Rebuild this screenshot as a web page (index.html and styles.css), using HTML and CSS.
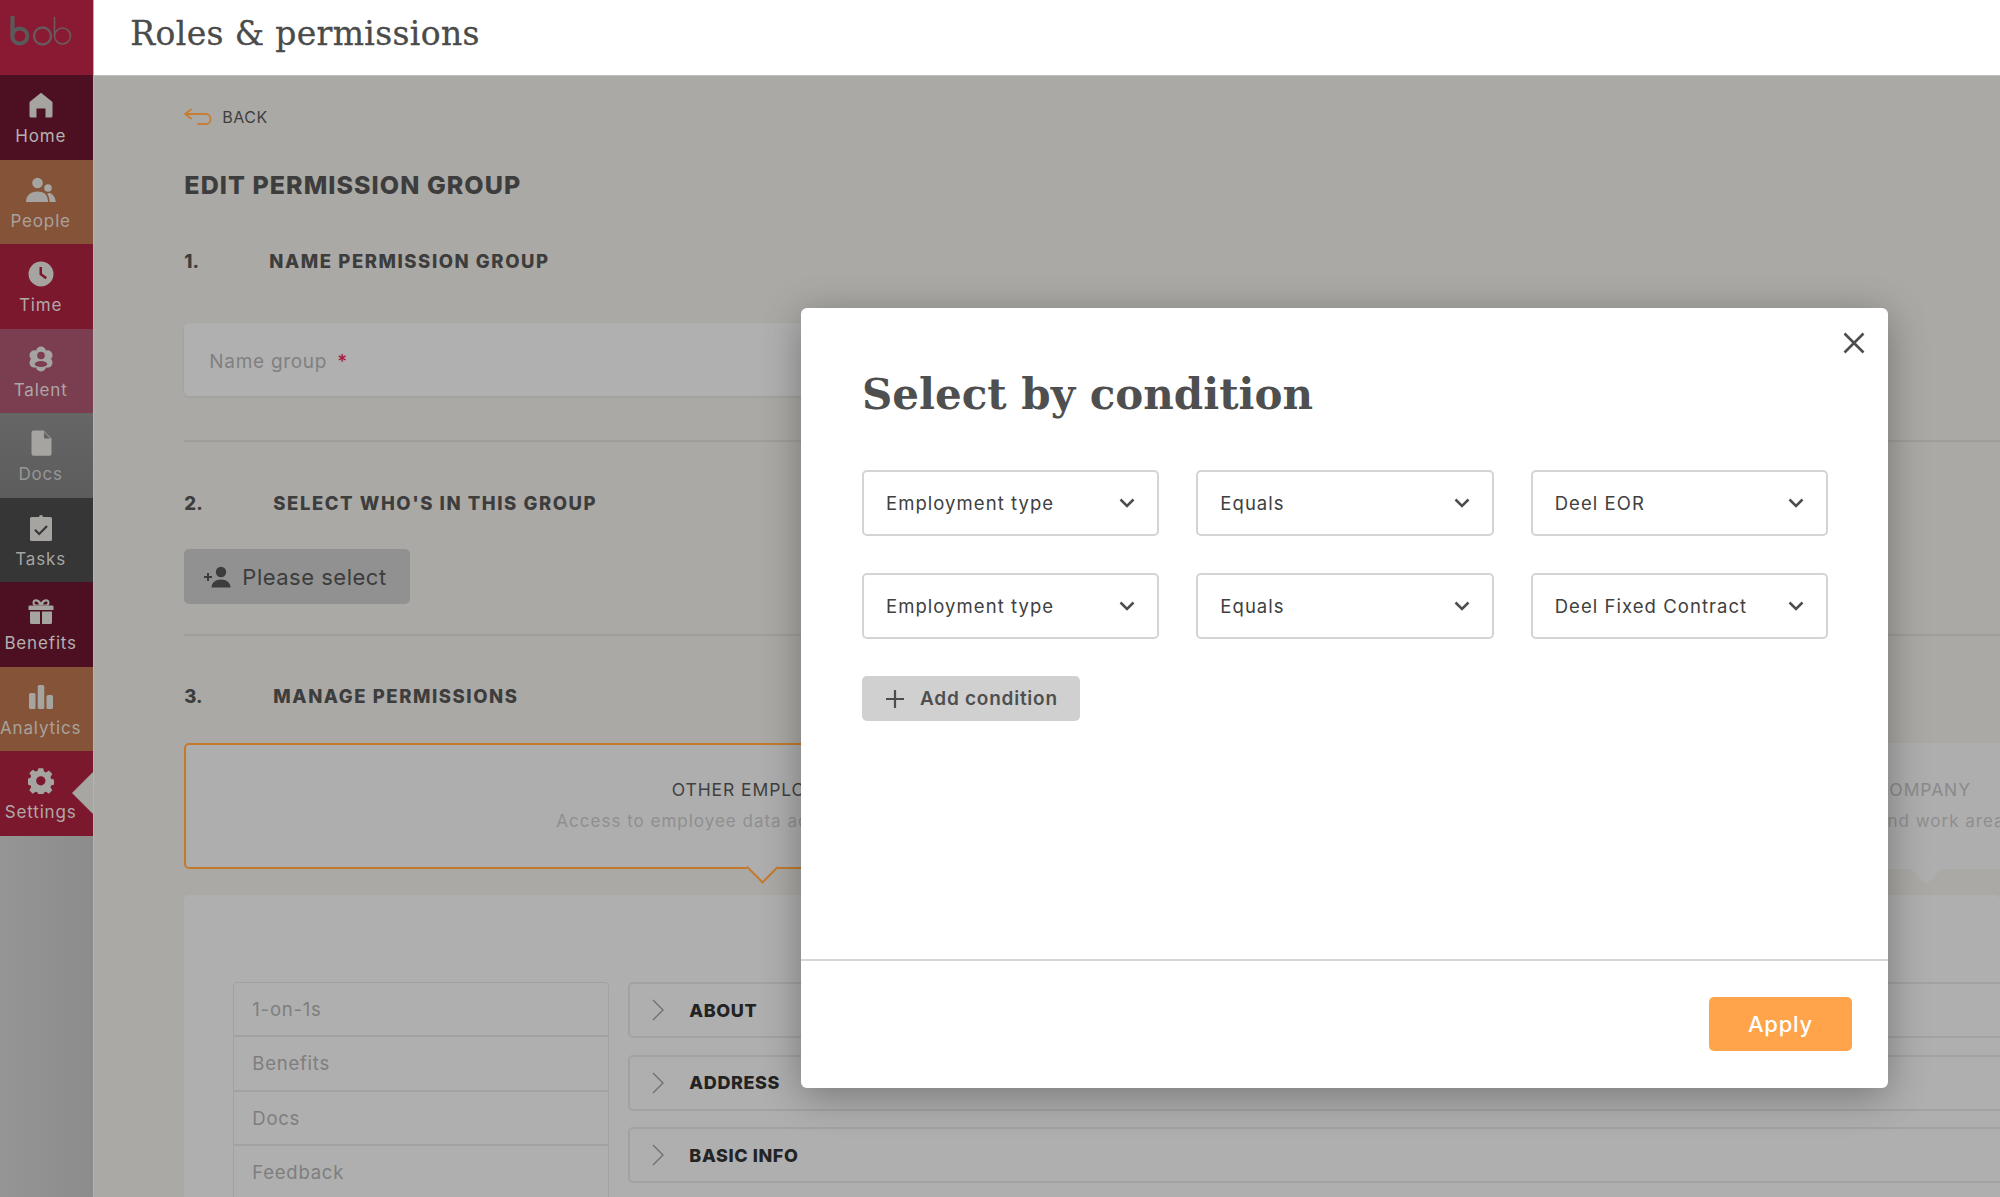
FILE: index.html
```html
<!DOCTYPE html>
<html lang="en">
<head>
<meta charset="utf-8">
<title>Roles &amp; permissions</title>
<link rel="stylesheet" href="styles.css">
</head>
<body>
<div class="app">
  <nav class="sidebar">
    <div class="logo">
      <svg width="62" height="32" viewBox="0 0 62 32" fill="none">
        <path d="M2.500 1.500v18" stroke="#5a5a5a" stroke-width="4.200" stroke-linecap="round"/>
        <circle cx="9.800" cy="20" r="7.600" stroke="#5a5a5a" stroke-width="4"/>
        <circle cx="32.500" cy="20" r="8.500" stroke="#665a5c" stroke-width="2.400"/>
        <path d="M44.500 1.500v18" stroke="#6b5a5e" stroke-width="1.600" stroke-linecap="round"/>
        <circle cx="52.500" cy="20" r="8" stroke="#6b5a5e" stroke-width="1.600"/>
      </svg>
    </div>
    <a class="nav-item nav-dark">
      <svg class="nav-icon" viewBox="0 0 26 26"><path d="M13 .8 24.200 9.800a1 1 0 0 1 .3.8V24a1.600 1.600 0 0 1-1.600 1.600H17.500V16.500h-9v9.100H3.100A1.600 1.600 0 0 1 1.500 24V10.600a1 1 0 0 1 .3-.8z"/></svg>
      <span>Home</span>
    </a>
    <a class="nav-item nav-orange">
      <svg class="nav-icon nav-icon-wide" viewBox="0 0 32 26"><circle cx="12.500" cy="6" r="5.300"/><circle cx="23" cy="11" r="3.800"/><path d="M1 25c0-6.500 5-10.500 11.500-10.500 3 0 5.500.8 7.500 2.300 2 1.800 3 4.800 3 8.200zM24.500 25c0-3.500-.8-6-2.300-8.300 1-.6 2-.8 2.800-.5 3 .6 5.500 4.500 5.800 8.800z"/></svg>
      <span>People</span>
    </a>
    <a class="nav-item nav-red">
      <svg class="nav-icon" viewBox="0 0 26 26"><path fill-rule="evenodd" d="M13 .5a12.500 12.500 0 1 1 0 25 12.500 12.500 0 0 1 0-25zM11.500 6v7.800l6 4.400 1.500-2-5-3.600V6z"/></svg>
      <span>Time</span>
    </a>
    <a class="nav-item nav-rose">
      <svg class="nav-icon" viewBox="0 0 26 26">
        <circle cx="13" cy="5.500" r="5"/><circle cx="13" cy="20.500" r="5"/>
        <circle cx="6.500" cy="9.250" r="5"/><circle cx="19.500" cy="9.250" r="5"/>
        <circle cx="6.500" cy="16.750" r="5"/><circle cx="19.500" cy="16.750" r="5"/>
        <circle cx="13" cy="13" r="7"/>
        <circle class="nav-cut" cx="13" cy="9.500" r="3.800"/>
        <ellipse class="nav-cut" cx="13" cy="18" rx="6.300" ry="3"/>
      </svg>
      <span>Talent</span>
    </a>
    <a class="nav-item nav-grey">
      <svg class="nav-icon" viewBox="0 0 26 26"><path fill-rule="evenodd" d="M5.500.4h10l8 8V23.700a2 2 0 0 1-2 2H5.500a2 2 0 0 1-2-2V2.400a2 2 0 0 1 2-2zM16 2v6.500h6.400z"/></svg>
      <span>Docs</span>
    </a>
    <a class="nav-item nav-black">
      <svg class="nav-icon" viewBox="0 0 26 26"><path fill-rule="evenodd" d="M13 0a2 2 0 0 1 2 2h7.500a1.500 1.500 0 0 1 1.500 1.500V24.500a1.500 1.500 0 0 1-1.500 1.500H3.500A1.500 1.500 0 0 1 2 24.500V3.500A1.500 1.500 0 0 1 3.500 2H11a2 2 0 0 1 2-2zM18.300 10.300 11.200 17.400 7.700 13.900 6.200 15.400l5 5 8.600-8.600z"/></svg>
      <span>Tasks</span>
    </a>
    <a class="nav-item nav-dark">
      <svg class="nav-icon" viewBox="0 0 26 26"><path d="M.5 7.700A1.200 1.200 0 0 1 1.700 6.500h22.600a1.200 1.200 0 0 1 1.200 1.200V11H.5zM2 12.500h10V25H3.500A1.500 1.500 0 0 1 2 23.500zM14 12.500h10V23.500a1.500 1.500 0 0 1-1.500 1.500H14z"/><path fill-rule="evenodd" d="M8 .2c2.200 0 4 1.400 5 3.300C14 1.600 15.800.2 18 .2c2.300 0 3.500 1.700 3.500 3.300 0 1.300-.5 2.300-1 3h-15c-.5-.7-1-1.700-1-3C4.500 1.900 5.700.2 8 .2zM8 2.500c-1 0-1.500.5-1.500 1.200 0 1 .9 1.800 2 1.800H11C10.700 4 9.500 2.500 8 2.500zM18 2.500c-1.500 0-2.700 1.500-3 3h2.500c1.100 0 2-.8 2-1.800 0-.7-.5-1.200-1.500-1.200z"/></svg>
      <span>Benefits</span>
    </a>
    <a class="nav-item nav-orange">
      <svg class="nav-icon" viewBox="0 0 26 26"><rect x="1" y="9" width="6.500" height="16" rx="1.500"/><rect x="9.750" y="1" width="6.500" height="24" rx="1.500"/><rect x="18.500" y="11" width="6.500" height="14" rx="1.500"/></svg>
      <span>Analytics</span>
    </a>
    <a class="nav-item nav-red nav-active">
      <svg class="nav-icon" viewBox="0 0 28 28"><path fill-rule="evenodd" d="M11.400.5h5.200l.8 3.600 2.200.9 3.100-2 3.700 3.700-2 3.100.9 2.200 3.500.8v5.200l-3.500.8-.9 2.200 2 3.100-3.700 3.700-3.100-2-2.200.9-.8 3.500h-5.200l-.8-3.500-2.200-.9-3.100 2-3.700-3.700 2-3.100-.9-2.200-3.500-.8V11.800l3.500-.8.9-2.200-2-3.100 3.700-3.700 3.100 2 2.200-.9zM14 9a5 5 0 1 0 0 10 5 5 0 0 0 0-10z" transform="translate(-.200 -.200)"/></svg>
      <span>Settings</span>
    </a>
    <div class="sidebar-rest"></div>
  </nav>

  <div class="main">
    <header class="topbar"><h1 class="page-title">Roles &amp; permissions</h1></header>
    <section class="content">
      <a class="back">
        <svg width="28" height="18" viewBox="0 0 28 18" fill="none" stroke="#c67e33" stroke-width="1.800" stroke-linecap="round" stroke-linejoin="round"><path d="M7 1.500 1 6l6 4.500M1 6h21a4.500 4.500 0 0 1 4.500 4.500v1A4.500 4.500 0 0 1 22 16h-8"/></svg>
        <span>BACK</span>
      </a>
      <h2 class="edit-title">EDIT PERMISSION GROUP</h2>

      <h3 class="step step-one"><span class="step-num step-num-one">1.</span>NAME PERMISSION GROUP</h3>
      <div class="name-field">Name group <b class="req">*</b></div>
      <hr class="rule rule-one">

      <h3 class="step step-two"><span class="step-num">2.</span>SELECT WHO'S IN THIS GROUP</h3>
      <button class="select-btn">
        <svg width="29" height="22" viewBox="0 0 29 22"><path d="M4 7v3H1v2h3v3h2v-3h3v-2H6V7z"/><circle cx="18" cy="6" r="5.200"/><path d="M8.500 21.500c0-5 4.200-8 9.500-8s9.500 3 9.500 8z"/></svg>
        <span>Please select</span>
      </button>
      <hr class="rule rule-two">

      <h3 class="step step-three"><span class="step-num">3.</span>MANAGE PERMISSIONS</h3>
      <div class="cards">
        <div class="card card-active">
          <div class="card-title">OTHER EMPLOYEES</div>
          <div class="card-sub">Access to employee data across the company</div>
        </div>
        <div class="card card-idle">
          <div class="card-title">COMPANY</div>
          <div class="card-sub">Data and work area</div>
        </div>
      </div>

      <div class="panel">
        <ul class="cat-list">
          <li>1-on-1s</li>
          <li>Benefits</li>
          <li>Docs</li>
          <li>Feedback</li>
        </ul>
        <div class="perm-list">
          <div class="perm"><svg width="12" height="22" viewBox="0 0 12 22" fill="none" stroke="#6e6e6e" stroke-width="1.300"><path d="M1 1l10 10L1 21"/></svg>ABOUT</div>
          <div class="perm"><svg width="12" height="22" viewBox="0 0 12 22" fill="none" stroke="#6e6e6e" stroke-width="1.300"><path d="M1 1l10 10L1 21"/></svg>ADDRESS</div>
          <div class="perm"><svg width="12" height="22" viewBox="0 0 12 22" fill="none" stroke="#6e6e6e" stroke-width="1.300"><path d="M1 1l10 10L1 21"/></svg>BASIC INFO</div>
        </div>
      </div>
    </section>
  </div>
</div>

<div class="modal">
  <svg class="modal-close" width="22" height="22" viewBox="0 0 22 22" fill="none" stroke="#4d4d4d" stroke-width="2.600"><path d="M1.500 1.500l19 19M20.500 1.500l-19 19"/></svg>
  <div class="modal-body">
    <h2 class="modal-title">Select by condition</h2>
    <div class="conditions">
      <div class="dropdown"><span>Employment type</span><svg width="16" height="10" viewBox="0 0 16 10" fill="none" stroke="#4d4d4d" stroke-width="2.500"><path d="M1.500 1.500 8 8l6.500-6.500"/></svg></div>
      <div class="dropdown"><span>Equals</span><svg width="16" height="10" viewBox="0 0 16 10" fill="none" stroke="#4d4d4d" stroke-width="2.500"><path d="M1.500 1.500 8 8l6.500-6.500"/></svg></div>
      <div class="dropdown"><span>Deel EOR</span><svg width="16" height="10" viewBox="0 0 16 10" fill="none" stroke="#4d4d4d" stroke-width="2.500"><path d="M1.500 1.500 8 8l6.500-6.500"/></svg></div>
      <div class="dropdown"><span>Employment type</span><svg width="16" height="10" viewBox="0 0 16 10" fill="none" stroke="#4d4d4d" stroke-width="2.500"><path d="M1.500 1.500 8 8l6.500-6.500"/></svg></div>
      <div class="dropdown"><span>Equals</span><svg width="16" height="10" viewBox="0 0 16 10" fill="none" stroke="#4d4d4d" stroke-width="2.500"><path d="M1.500 1.500 8 8l6.500-6.500"/></svg></div>
      <div class="dropdown"><span>Deel Fixed Contract</span><svg width="16" height="10" viewBox="0 0 16 10" fill="none" stroke="#4d4d4d" stroke-width="2.500"><path d="M1.500 1.500 8 8l6.500-6.500"/></svg></div>
    </div>
    <button class="add-btn">
      <svg width="18" height="18" viewBox="0 0 18 18" fill="none" stroke="#4d4d4d" stroke-width="2.200"><path d="M9 0v18M0 9h18"/></svg>
      <span>Add condition</span>
    </button>
  </div>
  <div class="modal-foot"><button class="apply-btn">Apply</button></div>
</div>
</body>
</html>
```

FILE: styles.css
```css
* { box-sizing: border-box; }
html, body { margin: 0; height: 100%; }
body {
  width: 2000px;
  height: 1197px;
  overflow: hidden;
  position: relative;
  font-family: Inter, "Noto Sans", "Liberation Sans", sans-serif;
  color: #3c3c3c;
  background: #aba9a5;
}
h1, h2, h3, ul { margin: 0; padding: 0; }
button { font-family: inherit; border: 0; }

.app { display: flex; width: 2000px; height: 1197px; }

/* Sidebar */
.sidebar {
  flex: 0 0 94px;
  display: flex;
  flex-direction: column;
  border-right: 1px solid #b4b3b0;
  background: #8f8f8f;
}
.logo { flex: 0 0 75px; background: #8a1a33; padding: 16px 0 0 10px; }
.logo svg { display: block; }
.nav-item {
  flex: 0 0 84.500px;
  display: flex;
  flex-direction: column;
  align-items: center;
  padding: 17px 12px 0 0;
  position: relative;
  font-size: 17px;
  letter-spacing: .85px;
  color: #a9a7a3;
}
.nav-item span { margin-top: 6px; line-height: 24px; white-space: nowrap; }
.nav-icon { width: 26px; height: 26px; fill: #a5a4a0; display: block; }
.nav-icon-wide { width: 32px; }
.nav-dark { background: #4c1022; color: #b5b1ae; }
.nav-orange { background: #845338; color: #a9a29c; }
.nav-red { background: #7b182e; color: #b0a9a7; }
.nav-rose { background: #7a3e50; color: #aca6a4; }
.nav-rose .nav-cut { fill: #7a3e50; }
.nav-grey { background: linear-gradient(#666, #5c5c5c); color: #979795; }
.nav-black { background: #363636; color: #a5a4a1; }
.nav-active::after {
  content: "";
  position: absolute;
  right: 0;
  top: 21px;
  width: 0;
  height: 0;
  border-style: solid;
  border-width: 21px 21px 21px 0;
  border-color: transparent #a7a6a2 transparent transparent;
}
.sidebar-rest { flex: 1; background: linear-gradient(90deg, #959595, #8c8c8c); }

/* Main */
.main { flex: 1; display: flex; flex-direction: column; min-width: 0; overflow: hidden; }
.topbar {
  flex: 0 0 76px;
  background: #fff;
  padding: 14px 0 0 36px;
  border-bottom: 1px solid #bdbdbb;
}
.page-title {
  font-family: "DejaVu Serif", serif;
  font-weight: 400;
  font-size: 33px;
  line-height: 40px;
  letter-spacing: .35px;
  -webkit-text-stroke: .3px #4b4b4b;
  color: #4b4b4b;
}
.content { flex: 1; padding: 29px 0 0 90px; min-height: 0; }

.back { display: flex; align-items: center; height: 24px; gap: 10px; font-size: 16px; letter-spacing: .5px; color: #3f3f3f; }
.edit-title { margin-top: 41px; font-size: 25px; line-height: 30px; font-weight: 800; letter-spacing: 1.050px; color: #3d3d3d; }
.step { display: flex; height: 24px; line-height: 24px; font-size: 18.500px; font-weight: 800; letter-spacing: 1.550px; color: #3d3d3d; }
.step-num { flex: 0 0 89px; letter-spacing: 0; }
.step-num-one { flex-basis: 85px; }
.step-one { margin-top: 49px; }
.step-two { margin-top: 49px; }
.step-three { margin-top: 48px; }

.name-field {
  margin-top: 50px;
  width: 900px;
  height: 73px;
  padding: 3px 25px 0;
  display: flex;
  align-items: center;
  gap: 10px;
  background: #b0b0b0;
  border-radius: 5px;
  box-shadow: 0 1px 3px rgba(0, 0, 0, .08);
  font-size: 19px;
  letter-spacing: .7px;
  color: #808080;
}
.req { color: #a8193f; font-weight: 500; }
.rule { margin: 0; border: 0; height: 2px; background: #9f9e9a; margin-right: -10px; }
.rule-one { margin-top: 44px; }
.rule-two { margin-top: 30px; }

.select-btn {
  margin-top: 34px;
  width: 226px;
  height: 55px;
  display: flex;
  align-items: center;
  gap: 10px;
  padding: 0 0 0 19px;
  background: #919191;
  border-radius: 5px;
  font-size: 22px;
  letter-spacing: .5px;
  color: #3c3c3c;
}
.select-btn svg { fill: #3c3c3c; }

.cards { margin-top: 35px; display: flex; gap: 9px; }
.card {
  flex: 0 0 1156px;
  height: 126px;
  padding-top: 36px;
  position: relative;
  text-align: center;
  background: #aeaeae;
  border-radius: 5px;
  font-size: 17px;
  white-space: nowrap;
}
.card-title { line-height: 24px; font-size: 17.500px; letter-spacing: .9px; color: #3f3f3f; }
.card-sub { margin-top: 7px; line-height: 24px; color: #8f8f8f; letter-spacing: 1px; }
.card-active { border: 2px solid #c47a2c; padding-top: 33px; }
.card-idle { padding-top: 35px; }
.card-idle .card-title { color: #8a8a8a; padding-right: 8px; }
.card-idle .card-sub { padding-right: 20px; }
.card::after {
  content: "";
  position: absolute;
  left: 50%;
  bottom: -11px;
  width: 21px;
  height: 21px;
  margin-left: -11px;
  transform: rotate(45deg);
  background: #aeaeae;
}
.card-active::after {
  bottom: -12px;
  border-right: 2px solid #c47a2c;
  border-bottom: 2px solid #c47a2c;
}

.panel {
  margin-top: 26px;
  height: 400px;
  padding: 87px 0 0 49px;
  display: flex;
  gap: 19px;
  background: #afafaf;
  border-radius: 5px;
}
.cat-list {
  flex: 0 0 376px;
  list-style: none;
  border: 1px solid #a2a2a2;
  border-radius: 4px;
  align-self: flex-start;
}
.cat-list li {
  height: 54.400px;
  line-height: 52px;
  padding-left: 18px;
  font-size: 18.500px;
  letter-spacing: .75px;
  color: #7e7e7e;
  border-bottom: 2px solid #a2a2a2;
}
.perm-list { flex: 1; display: flex; flex-direction: column; gap: 16.500px; margin-right: -10px; }
.perm {
  height: 56px;
  display: flex;
  align-items: center;
  gap: 25px;
  padding-left: 22px;
  border: 2px solid #a2a2a2;
  border-radius: 5px;
  font-size: 18px;
  font-weight: 800;
  letter-spacing: .6px;
  color: #232323;
}

/* Modal */
.modal {
  position: absolute;
  left: 801px;
  top: 308px;
  width: 1087px;
  height: 780px;
  display: flex;
  flex-direction: column;
  background: #fff;
  border-radius: 6px;
  box-shadow: 0 8px 40px rgba(0, 0, 0, .32);
}
.modal-close { position: absolute; top: 24px; right: 23px; }
.modal-body { flex: 1; padding: 63px 60px 0 61px; }
.modal-title {
  font-family: "DejaVu Serif", serif;
  font-weight: 700;
  font-size: 42px;
  line-height: 48px;
  color: #4f4f4f;
}
.conditions {
  margin-top: 51px;
  display: grid;
  grid-template-columns: repeat(3, 1fr);
  gap: 37px;
}
.dropdown {
  height: 66px;
  padding: 0 22px;
  display: flex;
  align-items: center;
  justify-content: space-between;
  border: 2px solid #d4d4d4;
  border-radius: 5px;
  font-size: 18.500px;
  letter-spacing: 1.050px;
  color: #404040;
}
.add-btn {
  margin-top: 37px;
  width: 218px;
  height: 45px;
  display: flex;
  align-items: center;
  gap: 16px;
  padding: 0 0 0 24px;
  background: #d0d0d0;
  border-radius: 5px;
  font-size: 19px;
  font-weight: 600;
  letter-spacing: .75px;
  color: #4f4f4f;
}
.modal-foot {
  flex: 0 0 129px;
  padding: 36px 36px 0 0;
  display: flex;
  justify-content: flex-end;
  align-items: flex-start;
  border-top: 2px solid #d6d6d6;
}
.apply-btn {
  width: 143px;
  height: 54px;
  background: #ffa44a;
  border-radius: 5px;
  font-size: 22px;
  font-weight: 500;
  letter-spacing: .8px;
  color: #fff;
}
```
